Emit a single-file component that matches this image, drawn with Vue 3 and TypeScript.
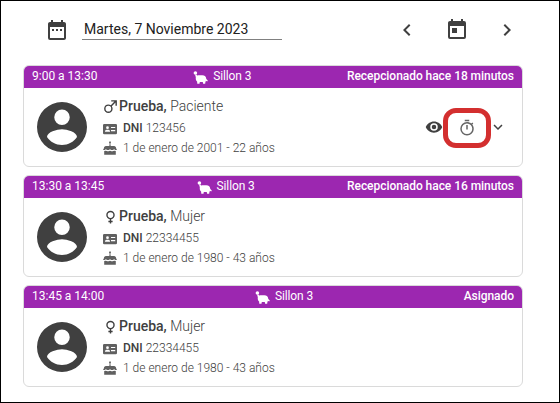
<script setup lang="ts">
interface Appointment {
  time: string
  chair: string
  status: string
  male: boolean
  surname: string
  name: string
  dni: string
  birth: string
  actions: boolean
}

const appointments: Appointment[] = [
  { time: '9:00 a 13:30', chair: 'Sillon 3', status: 'Recepcionado hace 18 minutos', male: true, surname: 'Prueba,', name: 'Paciente', dni: '123456', birth: '1 de enero de 2001 - 22 años', actions: true },
  { time: '13:30 a 13:45', chair: 'Sillon 3', status: 'Recepcionado hace 16 minutos', male: false, surname: 'Prueba,', name: 'Mujer', dni: '22334455', birth: '1 de enero de 1980 - 43 años', actions: false },
  { time: '13:45 a 14:00', chair: 'Sillon 3', status: 'Asignado', male: false, surname: 'Prueba,', name: 'Mujer', dni: '22334455', birth: '1 de enero de 1980 - 43 años', actions: false },
]

const icons = {
  range: 'M9 11H7v2h2v-2zm4 0h-2v2h2v-2zm4 0h-2v2h2v-2zm2-7h-1V2h-2v2H8V2H6v2H5c-1.11 0-1.99.9-1.99 2L3 20a2 2 0 0 0 2 2h14c1.1 0 2-.9 2-2V6c0-1.1-.9-2-2-2zm0 16H5V9h14v11z',
  today: 'M7,10H12V15H7M19,19H5V8H19M19,3H18V1H16V3H8V1H6V3H5C3.89,3 3,3.9 3,5V19A2,2 0 0,0 5,21H19A2,2 0 0,0 21,19V5A2,2 0 0,0 19,3Z',
  left: 'M15.41,16.58L10.83,12L15.41,7.41L14,6L8,12L14,18L15.41,16.58Z',
  right: 'M8.59,16.58L13.17,12L8.59,7.41L10,6L16,12L10,18L8.59,16.58Z',
  down: 'M7.41,8.58L12,13.17L16.59,8.58L18,10L12,16L6,10L7.41,8.58Z',
  account: 'M12,2A10,10 0 1,0 12,22A10,10 0 1,0 12,2M12,5A3.1,3.1 0 1,1 12,11.2A3.1,3.1 0 1,1 12,5M12,19.2C9.5,19.2 7.29,17.92 6,16C6.03,14 10,12.9 12,12.9C14,12.9 17.97,14 18,16C16.71,17.92 14.5,19.2 12,19.2Z',
  male: 'M9,9C10.29,9 11.5,9.41 12.47,10.11L17.58,5H13V3H21V11H19V6.41L13.89,11.5C14.59,12.5 15,13.7 15,15A6,6 0 0,1 9,21A6,6 0 0,1 3,15A6,6 0 0,1 9,9M9,11A4,4 0 0,0 5,15A4,4 0 0,0 9,19A4,4 0 0,0 13,15A4,4 0 0,0 9,11Z',
  female: 'M12,4A6,6 0 0,1 18,10C18,12.97 15.84,15.44 13,15.92V18H15V20H13V22H11V20H9V18H11V15.92C8.16,15.44 6,12.97 6,10A6,6 0 0,1 12,4M12,6A4,4 0 0,0 8,10A4,4 0 0,0 12,14A4,4 0 0,0 16,10A4,4 0 0,0 12,6Z',
  card: 'M1.2,2H12.8A1.2,1.2 0 0 1 14,3.2V11A1.2,1.2 0 0 1 12.8,12.2H1.2A1.2,1.2 0 0 1 0,11V3.2A1.2,1.2 0 0 1 1.2,2M8,4.9V6.1H12.2V4.9M8,8V9.2H12.2V8M4.5,4.3A1.4,1.4 0 0 0 4.5,7.1A1.4,1.4 0 0 0 4.5,4.3M2,9.7H7V9.2C7,8.2 5.5,7.8 4.5,7.8C3.5,7.8 2,8.2 2,9.2Z',
  cake: 'M7,0C7.7,.8 8,1.2 8,1.8A1,1 0 0 1 6,1.8C6,1.2 6.3,.8 7,0M6.4,3.2H7.6V5H11C12.4,5 13,6 13.1,7.2L14,9H12.3L11.2,8.3L9.8,9H8.3L7,8.3L5.7,9H4.2L2.8,8.3L1.7,9H0L.9,7.2C1,6 1.6,5 3,5H6.4M1.2,10.1L2.8,9.7L4.3,10.3H5.7L7,9.7L8.3,10.3H9.7L11.2,9.7L12.8,10.1V13.8H1.2Z',
  eye: 'M12,9A3,3 0 0,0 9,12A3,3 0 0,0 12,15A3,3 0 0,0 15,12A3,3 0 0,0 12,9M12,17A5,5 0 0,1 7,12A5,5 0 0,1 12,7A5,5 0 0,1 17,12A5,5 0 0,1 12,17M12,4.5C7,4.5 2.73,7.61 1,12C2.73,16.39 7,19.5 12,19.5C17,19.5 21.27,16.39 23,12C21.27,7.61 17,4.5 12,4.5Z',
  timer: 'M12,20A7,7 0 0,1 5,13A7,7 0 0,1 12,6A7,7 0 0,1 19,13A7,7 0 0,1 12,20M19.03,7.39L20.45,5.97C20,5.46 19.55,5 19.04,4.56L17.62,6C16.07,4.74 14.12,4 12,4A9,9 0 0,0 3,13A9,9 0 0,0 12,22C17,22 21,17.97 21,13C21,10.88 20.26,8.93 19.03,7.39M11,14H13V8H11M15,1H9V3H15V1Z',
}
</script>

<template>
  <main class="agenda">
    <header class="toolbar">
      <svg class="icon" viewBox="0 0 24 24"><path :d="icons.range" /></svg>
      <div class="date">Martes, 7 Noviembre 2023</div>
      <nav class="nav">
        <svg class="icon" viewBox="0 0 24 24"><path :d="icons.left" /></svg>
        <svg class="icon" viewBox="0 0 24 24"><path :d="icons.today" /></svg>
        <svg class="icon" viewBox="0 0 24 24"><path :d="icons.right" /></svg>
      </nav>
    </header>
    <section class="list">
      <article v-for="item in appointments" :key="item.time" class="card">
        <div class="card-head">
          <span class="time">{{ item.time }}</span>
          <span class="chair">
            <svg class="pig" viewBox="0 0 16 14">
              <circle cx="2.4" cy="2" r="1.8" />
              <path d="M3 3.2L4.2 4.6C5.5 3.9 7 4.3 9 4.2C11.8 4.1 13.2 5.6 13.3 8L14.8 9.6L14.2 10.5L12.9 9.8C12.6 10.8 12.3 11.4 12.2 12.8H10.1L9.8 11.1H6.8L6.5 12.8H4.3L4.1 10.4C2.9 9.5 2.6 8 2.8 6.2L2.2 4Z" />
            </svg>
            <span class="chair-name">{{ item.chair }}</span>
          </span>
          <span class="status">{{ item.status }}</span>
        </div>
        <div class="card-body">
          <svg class="avatar" viewBox="0 0 24 24"><path :d="icons.account" fill-rule="evenodd" /></svg>
          <div class="info">
            <div class="row name">
              <svg class="gender" viewBox="0 0 24 24"><path :d="item.male ? icons.male : icons.female" /></svg>
              <span><b>{{ item.surname }}</b> {{ item.name }}</span>
            </div>
            <div class="row dni">
              <svg class="small" viewBox="0 0 14 14"><path :d="icons.card" fill-rule="evenodd" /></svg>
              <span><b>DNI</b> {{ item.dni }}</span>
            </div>
            <div class="row birth">
              <svg class="small cake" viewBox="0 0 14 14"><path :d="icons.cake" /></svg>
              <span>{{ item.birth }}</span>
            </div>
          </div>
          <div v-if="item.actions" class="actions">
            <svg class="action" viewBox="0 0 24 24"><path :d="icons.eye" /></svg>
            <span class="highlight"><svg class="action timer" viewBox="0 0 24 24"><path :d="icons.timer" /></svg></span>
            <svg class="action expand" viewBox="0 0 24 24"><path :d="icons.down" /></svg>
          </div>
        </div>
      </article>
    </section>
  </main>
</template>

<style>
body { margin: 0; background: #fff; }
</style>

<style scoped>
.agenda {
  box-sizing: border-box;
  width: 560px;
  height: 403px;
  border: 1px solid #000;
  padding: 17px 36px 0 22px;
  font-family: Roboto, sans-serif;
  color: #404040;
  background: #fff;
  overflow: hidden;
}
svg { display: block; flex: none; fill: #404040; }
.toolbar { display: flex; height: 24px; padding-left: 22px; margin-bottom: 23px; }
.icon { width: 24px; height: 24px; }
.date {
  box-sizing: border-box;
  width: 200px;
  height: 22px;
  margin-left: 13px;
  padding-left: 2px;
  border-bottom: 1px solid #808080;
  font-size: 14px;
  line-height: 22px;
  color: #212121;
  white-space: nowrap;
}
.nav { display: flex; gap: 26px; margin-left: 113px; }
.list { display: flex; flex-direction: column; gap: 8px; }
.card {
  box-sizing: border-box;
  width: 500px;
  height: 102px;
  border: 1px solid #dadada;
  border-radius: 6px;
  overflow: hidden;
}
.card-head {
  display: flex;
  justify-content: space-between;
  height: 22px;
  padding: 0 8px;
  background: #9c27b0;
  color: #fff;
  font-size: 12px;
  line-height: 20px;
  white-space: nowrap;
}
.chair { display: flex; }
.chair-name { letter-spacing: -0.12px; }
.pig { width: 16px; height: 14px; margin: 5px 4px 0 0; fill: #fff; }
.status { font-weight: 500; letter-spacing: -0.05px; }
.card-body { display: flex; align-items: center; height: 78px; padding-left: 8px; }
.avatar { width: 60px; height: 60px; }
.info { width: 300px; margin-left: 10px; }
.row { display: flex; align-items: center; height: 20px; font-weight: 300; font-size: 12px; white-space: nowrap; }
.row b { font-weight: 500; }
.name { box-sizing: border-box; height: 22px; padding-bottom: 2px; font-size: 14px; }
.gender { width: 17px; height: 17px; }
.small { width: 14px; height: 14px; margin: 2px 6px 0 1px; fill: #606060; }
.cake { margin-top: 0; }
.actions { display: flex; align-items: center; height: 78px; margin-left: 23px; }
.action { width: 18px; height: 18px; }
.highlight {
  box-sizing: border-box;
  display: flex;
  align-items: center;
  justify-content: center;
  width: 48px;
  height: 40px;
  padding-right: 1px;
  margin-top: 1px;
  border: 5px solid #d32f2f;
  border-radius: 13px;
}
.timer { fill: #666; }
.expand { margin-left: -2px; }
</style>
